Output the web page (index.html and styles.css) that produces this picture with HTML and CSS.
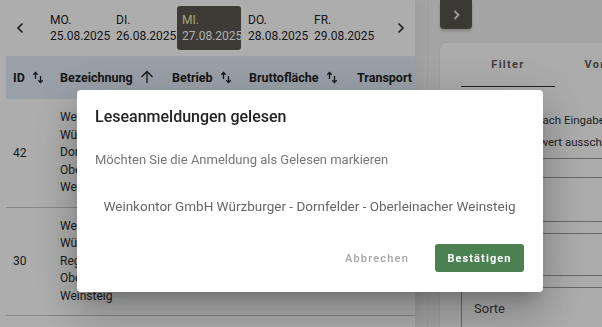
FILE: index.html
```html
<!DOCTYPE html>
<html lang="de">
<head>
  <meta charset="UTF-8" />
  <meta name="viewport" content="width=device-width, initial-scale=1" />
  <title>Leseanmeldungen</title>
  <link rel="stylesheet" href="styles.css">
</head>
<body>

  <div class="app">
    <!-- Main list -->
    <main class="main">
      <div class="days">
        <button class="day-nav" aria-label="Zurück">
          <svg width="8" height="12" viewBox="0 0 8 12"><path d="M6.5 1.5 2 6l4.5 4.5" fill="none" stroke="#2c2c2c" stroke-width="1.6"/></svg>
        </button>
        <div class="day"><span>MO.</span><span>25.08.2025</span></div>
        <div class="day"><span>DI.</span><span>26.08.2025</span></div>
        <div class="day active"><span>MI.</span><span>27.08.2025</span></div>
        <div class="day"><span>DO.</span><span>28.08.2025</span></div>
        <div class="day"><span>FR.</span><span>29.08.2025</span></div>
        <button class="day-nav" aria-label="Weiter">
          <svg width="8" height="12" viewBox="0 0 8 12"><path d="M1.5 1.5 6 6l-4.5 4.5" fill="none" stroke="#2c2c2c" stroke-width="1.6"/></svg>
        </button>
      </div>

      <div class="table-wrap">
        <table class="grid">
          <thead>
            <tr>
              <th class="col-id">ID <svg class="sort" width="12" height="13" viewBox="0 0 12 13"><path d="M3.5 8V1.5M1.3 3.7 3.5 1.5l2.2 2.2M8.5 5v6.5M6.3 9.3l2.2 2.2 2.2-2.2" fill="none" stroke="#222" stroke-width="1.3"/></svg></th>
              <th class="col-name">Bezeichnung <svg class="sort" width="14" height="14" viewBox="0 0 14 14"><path d="M7 13V1.5M1.5 7 7 1.5 12.5 7" fill="none" stroke="#222" stroke-width="1.3"/></svg></th>
              <th class="col-betrieb">Betrieb <svg class="sort" width="12" height="13" viewBox="0 0 12 13"><path d="M3.5 8V1.5M1.3 3.7 3.5 1.5l2.2 2.2M8.5 5v6.5M6.3 9.3l2.2 2.2 2.2-2.2" fill="none" stroke="#222" stroke-width="1.3"/></svg></th>
              <th class="col-flaeche">Bruttofläche <svg class="sort" width="12" height="13" viewBox="0 0 12 13"><path d="M3.5 8V1.5M1.3 3.7 3.5 1.5l2.2 2.2M8.5 5v6.5M6.3 9.3l2.2 2.2 2.2-2.2" fill="none" stroke="#222" stroke-width="1.3"/></svg></th>
              <th class="col-transport">Transport</th>
            </tr>
          </thead>
          <tbody>
            <tr>
              <td>42</td>
              <td><div class="name">Weinkontor GmbH Würzburger - Dornfelder - Oberleinacher Weinsteig</div></td>
              <td></td>
              <td></td>
              <td></td>
            </tr>
            <tr>
              <td>30</td>
              <td><div class="name">Weinkontor GmbH Würzburger - Regent - Oberleinacher Weinsteig</div></td>
              <td></td>
              <td></td>
              <td></td>
            </tr>
          </tbody>
        </table>
      </div>
    </main>

    <!-- Filter panel -->
    <aside class="side">
      <button class="side-toggle" aria-label="Panel">
        <svg width="7" height="10" viewBox="0 0 7 10"><path d="M1.5 1 5.5 5l-4 4" fill="none" stroke="#e6e6e6" stroke-width="1.8"/></svg>
      </button>
      <div class="card">
        <div class="tabs">
          <div class="tab active">Filter</div>
          <div class="tab wide">Vorlagen</div>
        </div>
        <div class="hint">
          <div class="hint-line">Suche startet nach Eingabe</div>
          <div class="hint-line">Leerwert ausschließen</div>
        </div>
        <div class="field first"><span></span><span class="caret"></span></div>
        <div class="field"><span></span><span class="caret"></span></div>
        <div class="field"><span>Sorte</span><span class="caret"></span></div>
      </div>
    </aside>
  </div>

  <div class="backdrop"></div>

  <div class="dialog" role="dialog">
    <h2>Leseanmeldungen gelesen</h2>
    <p class="question">Möchten Sie die Anmeldung als Gelesen markieren</p>
    <p class="entry">Weinkontor GmbH Würzburger - Dornfelder - Oberleinacher Weinsteig</p>
    <div class="actions">
      <button class="btn-text">Abbrechen</button>
      <button class="btn-ok">Bestätigen</button>
    </div>
  </div>

</body>
</html>
```

FILE: styles.css
```css
body {
  margin: 0;
  font-family: Roboto, "Liberation Sans", sans-serif;
  color: #222;
  background: #f4f4f4;
  width: 602px;
  height: 327px;
  overflow: hidden;
}
button {
  font-family: inherit;
  border: none;
  background: none;
  padding: 0;
  cursor: pointer;
}
.app {
  display: flex;
  height: 327px;
}

/* main list */
.main {
  width: 415px;
  flex: none;
  background: #fff;
  overflow: hidden;
  box-shadow: 6px 0 10px rgba(0,0,0,0.06);
}
.days {
  display: flex;
  align-items: center;
  height: 56px;
  padding-left: 13px;
}
.day-nav {
  width: 14px;
  height: 20px;
  display: flex;
  align-items: center;
  justify-content: center;
}
.days .day-nav:first-child {
  margin-right: 23px;
}
.days .day-nav:last-child {
  margin-left: 14px;
}
.day {
  display: flex;
  flex-direction: column;
  justify-content: center;
  width: 66px;
  height: 44px;
  box-sizing: border-box;
  padding-left: 5px;
  margin-left: -5px;
  margin-right: 5px;
  font-size: 12px;
  line-height: 16px;
  color: #222;
  border-radius: 3px;
}
.day.active {
  width: 64px;
  margin-right: 7px;
  background: #5a5750;
  color: #fff;
}
.day.active span:first-child {
  color: #f6efb0;
}
.table-wrap {
  padding-left: 6px;
}
.grid {
  border-collapse: collapse;
  table-layout: fixed;
  width: 460px;
  font-size: 12px;
}
.grid th {
  background: #e3ecf8;
  height: 43px;
  padding: 0 0 0 7px;
  text-align: left;
  font-weight: 700;
  font-size: 12.5px;
  white-space: nowrap;
}
.sort {
  vertical-align: -2px;
  margin-left: 4px;
}
.col-id { width: 40px; }
.col-name { width: 105px; }
.col-betrieb { width: 70px; }
.col-flaeche { width: 101px; }
.grid td {
  padding: 10px 0 10px 7px;
  height: 87px;
  border-bottom: 1px solid #c6c6c6;
  vertical-align: middle;
  color: #2a2a2a;
}
.name {
  width: 100px;
  line-height: 17.5px;
}

/* filter panel */
.side {
  flex: 1;
  position: relative;
  padding-left: 12px;
  border-left: 1px solid #e9e9e9;
  margin-left: 12px;
  background: #f2f2f2;
}
.side-toggle {
  width: 32px;
  height: 29px;
  background: #57554f;
  border-radius: 0 0 4px 4px;
  display: flex;
  align-items: center;
  justify-content: center;
  box-shadow: 0 2px 3px rgba(0,0,0,0.2);
}
.card {
  margin-top: 14px;
  background: #fcfcfc;
  border-radius: 6px 0 0 0;
  height: 300px;
  padding: 0 0 0 21px;
  box-shadow: 0 0 3px rgba(0,0,0,0.08);
}
.tabs {
  display: flex;
  height: 44px;
}
.tab {
  width: 94px;
  flex: none;
  display: flex;
  align-items: center;
  justify-content: center;
  font-size: 11px;
  font-weight: 700;
  letter-spacing: 1.3px;
  color: #5d5d5d;
  border-bottom: 1.5px solid transparent;
}
.tab.wide {
  width: 114px;
}
.tab.active {
  border-bottom-color: #333;
}
.hint {
  margin-top: 20px;
  padding: 2px 0 5px 0;
  border-bottom: 1px solid #9a9a9a;
  font-size: 11.5px;
  line-height: 22px;
  color: #333;
  white-space: nowrap;
}
.hint-line:first-child {
  padding-left: 4px;
}
.hint-line:last-child {
  padding-left: 56px;
}
.field {
  box-sizing: border-box;
  height: 43px;
  margin-top: 11px;
  border: 1px solid #9a9a9a;
  border-right: none;
  display: flex;
  align-items: center;
  justify-content: space-between;
  padding-left: 12px;
  font-size: 13px;
  color: #444;
}
.field.first {
  margin-top: 18px;
  height: 45px;
}
.caret {
  width: 6px;
  border-top: 1px solid #555;
}

/* dialog */
.backdrop {
  position: fixed;
  inset: 0;
  background: rgba(0,0,0,0.32);
}
.dialog {
  position: fixed;
  left: 77px;
  top: 90px;
  width: 466px;
  height: 202px;
  box-sizing: border-box;
  padding: 17px 19px 20px 18px;
  background: #fff;
  border-radius: 4px;
  box-shadow: 0 11px 15px -7px rgba(0,0,0,0.2), 0 24px 38px 3px rgba(0,0,0,0.14), 0 9px 46px 8px rgba(0,0,0,0.12);
  display: flex;
  flex-direction: column;
}
.dialog h2 {
  margin: 0;
  font-size: 16px;
  font-weight: 500;
  line-height: 20px;
  color: #222;
}
.question {
  margin: 24px 0 0;
  font-size: 13px;
  line-height: 18px;
  color: #777;
}
.entry {
  margin: 28px 0 0;
  text-align: center;
  font-size: 13.5px;
  line-height: 18px;
  color: #666;
}
.actions {
  margin-top: auto;
  display: flex;
  justify-content: flex-end;
  align-items: center;
  gap: 10px;
}
.btn-text {
  height: 28px;
  padding: 0 16px;
  font-size: 11px;
  font-weight: 500;
  letter-spacing: 1.2px;
  color: #a6a6a6;
}
.btn-ok {
  height: 28px;
  width: 89px;
  border-radius: 3px;
  background: #4b8150;
  color: #fff;
  font-size: 11px;
  font-weight: 700;
  letter-spacing: 1.1px;
}
```
